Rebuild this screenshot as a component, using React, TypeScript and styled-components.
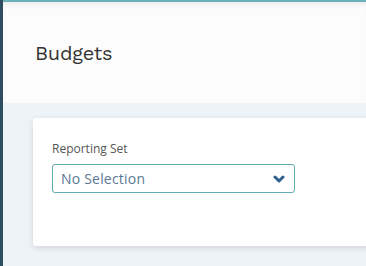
import React from "react";
import styled, { createGlobalStyle } from "styled-components";

const Global = createGlobalStyle`
  html, body { margin: 0; padding: 0; }
  body {
    background: #eef3f8;
    font-family: "Open Sans", "Liberation Sans", sans-serif;
    overflow: hidden;
    width: 366px;
    height: 266px;
  }
`;

const Shell = styled.div`
  display: flex;
  height: 266px;
  width: 366px;
  overflow: hidden;
`;

const Sidebar = styled.div`
  width: 3px;
  flex: none;
  background: #2e4e60;
`;

const Main = styled.div`
  flex: 1;
  display: flex;
  flex-direction: column;
  min-width: 0;
`;

const TopBar = styled.div`
  height: 2px;
  background: #6bb0ba;
  flex: none;
`;

const Header = styled.div`
  height: 101px;
  flex: none;
  background: #fcfcfc;
  box-shadow: inset 0 6px 8px -6px rgba(0, 0, 0, 0.12);
  display: flex;
  align-items: center;
  padding-left: 32px;
  box-sizing: border-box;
`;

const Title = styled.h1`
  margin: 0;
  font-family: "Work Sans", "Open Sans", sans-serif;
  font-weight: 400;
  font-size: 20px;
  color: #333;
  letter-spacing: -0.2px;
`;

const Content = styled.div`
  padding: 15px 0 0 30px;
`;

const Card = styled.div`
  width: 420px;
  background: #fff;
  border-radius: 3px;
  box-shadow: 0 2px 6px rgba(0, 0, 0, 0.12);
  padding: 23px 19px 53px;
  box-sizing: border-box;
`;

const Label = styled.div`
  font-size: 12px;
  color: #555;
  margin-bottom: 7px;
  line-height: 16px;
`;

const Select = styled.div`
  width: 243px;
  height: 29px;
  box-sizing: border-box;
  border: 1px solid #63aab3;
  border-radius: 3px;
  display: flex;
  align-items: center;
  justify-content: space-between;
  padding: 0 9px 0 8px;
`;

const Value = styled.span`
  font-size: 14px;
  color: #5a7894;
  letter-spacing: 0.2px;
`;

export default function App() {
  return (
    <>
      <Global />
      <Shell>
        <Sidebar />
        <Main>
          <TopBar />
          <Header>
            <Title>Budgets</Title>
          </Header>
          <Content>
            <Card>
              <Label>Reporting Set</Label>
              <Select>
                <Value>No Selection</Value>
                <svg width="12" height="8" viewBox="0 0 12 8">
                  <path d="M2 2 L6 6 L10 2" fill="none" stroke="#2f5f8f" strokeWidth="3" strokeLinecap="round" strokeLinejoin="round" />
                </svg>
              </Select>
            </Card>
          </Content>
        </Main>
      </Shell>
    </>
  );
}
